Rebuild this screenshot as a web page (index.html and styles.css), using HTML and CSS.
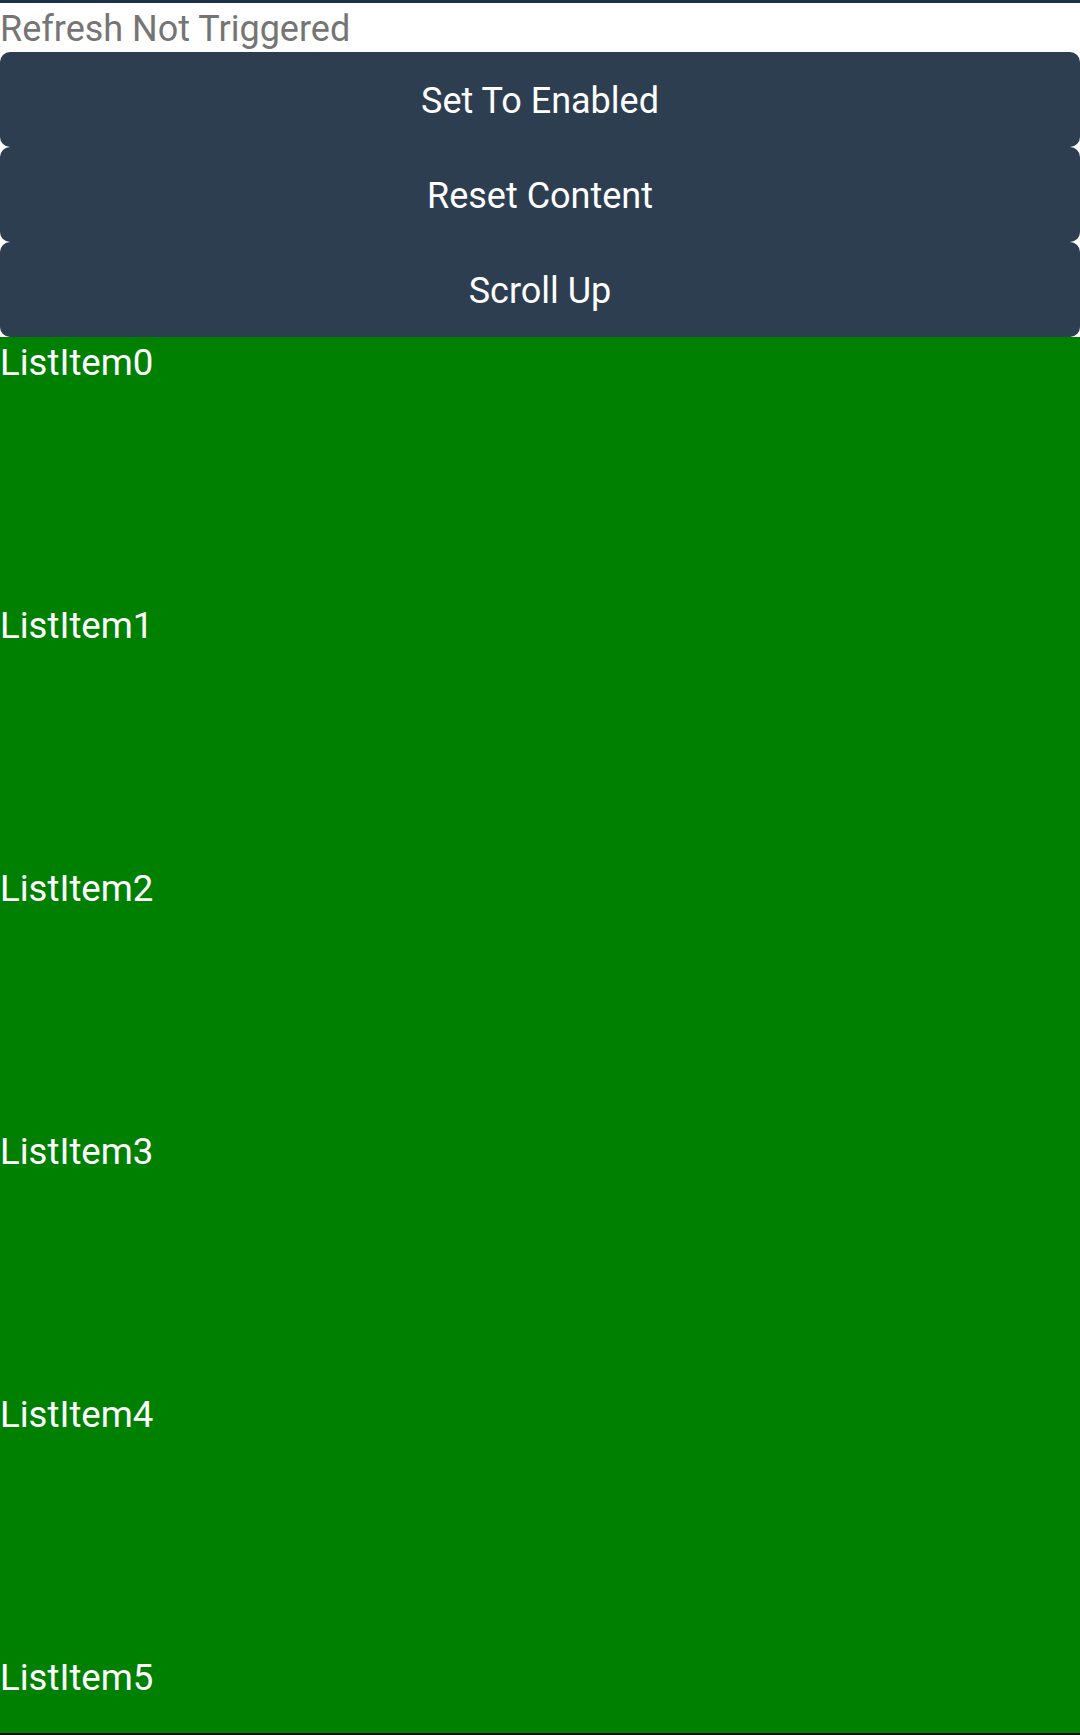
FILE: index.html
```html
<!DOCTYPE html>
<html>
<head>
<meta charset="utf-8">
<link rel="stylesheet" href="styles.css">
</head>
<body>
<div class="app">
  <div class="topbar"></div>
  <div class="status">Refresh Not Triggered</div>
  <div class="buttons">
    <button class="btn">Set To Enabled</button>
    <button class="btn">Reset Content</button>
    <button class="btn">Scroll Up</button>
  </div>
  <div class="list">
    <div class="item">ListItem0</div>
    <div class="item">ListItem1</div>
    <div class="item">ListItem2</div>
    <div class="item">ListItem3</div>
    <div class="item">ListItem4</div>
    <div class="item">ListItem5</div>
  </div>
  <div class="bottombar"></div>
</div>
</body>
</html>
```

FILE: styles.css
```css
html, body {
  margin: 0;
  padding: 0;
  background: #ffffff;
}
.app {
  width: 1080px;
  height: 1735px;
  display: flex;
  flex-direction: column;
  overflow: hidden;
  font-family: Roboto, "Noto Sans", sans-serif;
}
.topbar {
  height: 3px;
  background: #1c314b;
  flex: none;
}
.status {
  box-sizing: border-box;
  height: 49px;
  padding-top: 3px;
  font-size: 36px;
  line-height: 46px;
  color: #757575;
  flex: none;
  white-space: nowrap;
}
.buttons {
  display: flex;
  flex-direction: column;
  flex: none;
}
.btn {
  box-sizing: border-box;
  height: 95px;
  margin: 0;
  border: none;
  border-radius: 10px;
  background: #2e3e51;
  color: #ffffff;
  font-family: Roboto, "Noto Sans", sans-serif;
  font-size: 36px;
  padding: 3px 0 0 0;
  display: flex;
  align-items: center;
  justify-content: center;
}
.list {
  flex: 1;
  background: #008000;
  overflow: hidden;
}
.item {
  box-sizing: border-box;
  height: 263px;
  padding-top: 3px;
  color: #ffffff;
  font-size: 36.6px;
  line-height: 46px;
  white-space: nowrap;
}
.bottombar {
  height: 2px;
  background: #111111;
  flex: none;
}
```
